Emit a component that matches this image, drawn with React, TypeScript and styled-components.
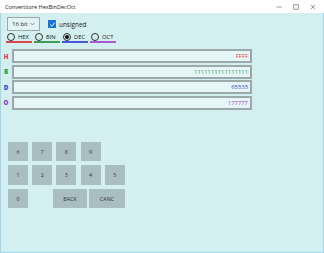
import React from 'react';
import styled, { createGlobalStyle } from 'styled-components';

const GlobalStyle = createGlobalStyle`
  html, body { margin: 0; padding: 0; background: #ffffff; }
  * { box-sizing: border-box; }
`;

const FONT = `"Open Sans", "Noto Sans", "DejaVu Sans", sans-serif`;

const Window = styled.div`
  width: 324px;
  height: 253px;
  display: flex;
  flex-direction: column;
  font-family: ${FONT};
  overflow: hidden;
`;

const TitleBar = styled.div`
  height: 13px;
  flex: none;
  background: #ffffff;
  display: flex;
  align-items: center;
  padding-left: 5px;
`;

const Title = styled.span`
  font-size: 5.5px;
  color: #222;
  flex: 1;
`;

const Controls = styled.div`
  display: flex;
  align-items: center;
  gap: 9px;
  padding-right: 7px;
`;

const ControlIcon = styled.svg`
  width: 8px;
  height: 8px;
  display: block;
`;

const Content = styled.div`
  flex: 1;
  background: #d3eff0;
  border: 1px solid #a3d6ec;
  border-top: none;
  display: flex;
  flex-direction: column;
  padding-top: 4px;
`;

const TopRow = styled.div`
  display: flex;
  align-items: center;
  padding-left: 6px;
  gap: 8px;
  height: 14px;
`;

const Combo = styled.div`
  width: 33px;
  height: 14px;
  border: 1px solid #9ba7a8;
  background: #e4f3f4;
  display: flex;
  align-items: center;
  justify-content: space-between;
  padding: 0 4px 0 4px;
  font-size: 6px;
  color: #222;
`;

const CheckRow = styled.label`
  display: flex;
  align-items: center;
  gap: 3px;
  font-size: 6.4px;
  color: #222;
`;

const CheckBox = styled.span`
  width: 8px;
  height: 8px;
  background: #1d74d8;
  display: flex;
  align-items: center;
  justify-content: center;
`;

const RadioRow = styled.div`
  display: flex;
  gap: 2px;
  padding-left: 5px;
  margin-top: 1px;
`;

const RadioItem = styled.div<{ $line: string }>`
  width: 26px;
  height: 11px;
  display: flex;
  align-items: center;
  gap: 3px;
  padding-left: 1px;
  border-bottom: 2px solid ${(p) => p.$line};
  font-size: 5.8px;
  color: #222;
`;

const RadioCircle = styled.span<{ $checked?: boolean }>`
  width: 8px;
  height: 8px;
  border-radius: 50%;
  border: 1px solid #333;
  display: flex;
  align-items: center;
  justify-content: center;
  background: transparent;
  &::after {
    content: '';
    display: ${(p) => (p.$checked ? 'block' : 'none')};
    width: 4px;
    height: 4px;
    border-radius: 50%;
    background: #111;
  }
`;

const Fields = styled.div`
  display: flex;
  flex-direction: column;
  gap: 1.6px;
  margin-top: 6px;
  padding-left: 2px;
`;

const FieldRow = styled.div`
  display: flex;
  align-items: center;
  height: 14px;
`;

const FieldLabel = styled.span<{ $color: string }>`
  width: 6px;
  margin-right: 3px;
  text-align: center;
  font-size: 6.2px;
  font-weight: 800;
  color: ${(p) => p.$color};
`;

const FieldBox = styled.div<{ $color: string }>`
  width: 240px;
  height: 14px;
  border: 2px solid #9ca8a9;
  background: #e6f6f8;
  display: flex;
  align-items: center;
  justify-content: flex-end;
  padding-right: 2px;
  font-size: 5.9px;
  color: ${(p) => p.$color};
`;

const Keypad = styled.div`
  display: flex;
  flex-direction: column;
  gap: 4px;
  margin-top: 32px;
  padding-left: 7px;
`;

const KeyRow = styled.div`
  display: flex;
  gap: 4.2px;
`;

const Key = styled.div<{ $w?: number; $ml?: number }>`
  width: ${(p) => p.$w ?? 20}px;
  height: 19.5px;
  margin-left: ${(p) => p.$ml ?? 0}px;
  background: #a9bec0;
  display: flex;
  align-items: center;
  justify-content: center;
  font-size: 5.4px;
  color: #333;
`;

const fields = [
  { label: 'H', value: 'FFFF', color: '#ee3b47' },
  { label: 'B', value: '1111111111111111', color: '#27a03a' },
  { label: 'D', value: '65535', color: '#3444e0' },
  { label: 'O', value: '177777', color: '#9b3fd0' },
];

const radios = [
  { label: 'HEX', line: '#d9474f' },
  { label: 'BIN', line: '#3f9e55' },
  { label: 'DEC', line: '#4656d6', checked: true },
  { label: 'OCT', line: '#a55bd6' },
];

export default function App() {
  return (
    <>
      <GlobalStyle />
      <Window>
        <TitleBar>
          <Title>Convertitore HexBinDecOct</Title>
          <Controls>
            <ControlIcon viewBox="0 0 8 8">
              <line x1="1.5" y1="4" x2="6.5" y2="4" stroke="#555" strokeWidth="0.6" />
            </ControlIcon>
            <ControlIcon viewBox="0 0 8 8">
              <rect x="1.8" y="1.8" width="4.4" height="4.4" fill="none" stroke="#555" strokeWidth="0.6" />
            </ControlIcon>
            <ControlIcon viewBox="0 0 8 8">
              <path d="M1.8 1.8 L6.2 6.2 M6.2 1.8 L1.8 6.2" stroke="#555" strokeWidth="0.6" />
            </ControlIcon>
          </Controls>
        </TitleBar>
        <Content>
          <TopRow>
            <Combo>
              <span>16 bit</span>
              <svg width="5" height="4" viewBox="0 0 5 4">
                <path d="M0.5 1 L2.5 3 L4.5 1" fill="none" stroke="#555" strokeWidth="0.6" />
              </svg>
            </Combo>
            <CheckRow>
              <CheckBox>
                <svg width="7" height="7" viewBox="0 0 7 7">
                  <path d="M1.2 3.6 L2.8 5.2 L5.9 1.6" fill="none" stroke="#fff" strokeWidth="0.9" />
                </svg>
              </CheckBox>
              unsigned
            </CheckRow>
          </TopRow>
          <RadioRow>
            {radios.map((r) => (
              <RadioItem key={r.label} $line={r.line}>
                <RadioCircle $checked={r.checked} />
                {r.label}
              </RadioItem>
            ))}
          </RadioRow>
          <Fields>
            {fields.map((f) => (
              <FieldRow key={f.label}>
                <FieldLabel $color={f.color}>{f.label}</FieldLabel>
                <FieldBox $color={f.color}>{f.value}</FieldBox>
              </FieldRow>
            ))}
          </Fields>
          <Keypad>
            <KeyRow>
              <Key>6</Key>
              <Key>7</Key>
              <Key>8</Key>
              <Key>9</Key>
            </KeyRow>
            <KeyRow>
              <Key>1</Key>
              <Key>2</Key>
              <Key>3</Key>
              <Key>4</Key>
              <Key>5</Key>
            </KeyRow>
            <KeyRow>
              <Key>0</Key>
              <Key $w={34} $ml={20.8}>BACK</Key>
              <Key $w={36} $ml={-2.2}>CANC</Key>
            </KeyRow>
          </Keypad>
        </Content>
      </Window>
    </>
  );
}
